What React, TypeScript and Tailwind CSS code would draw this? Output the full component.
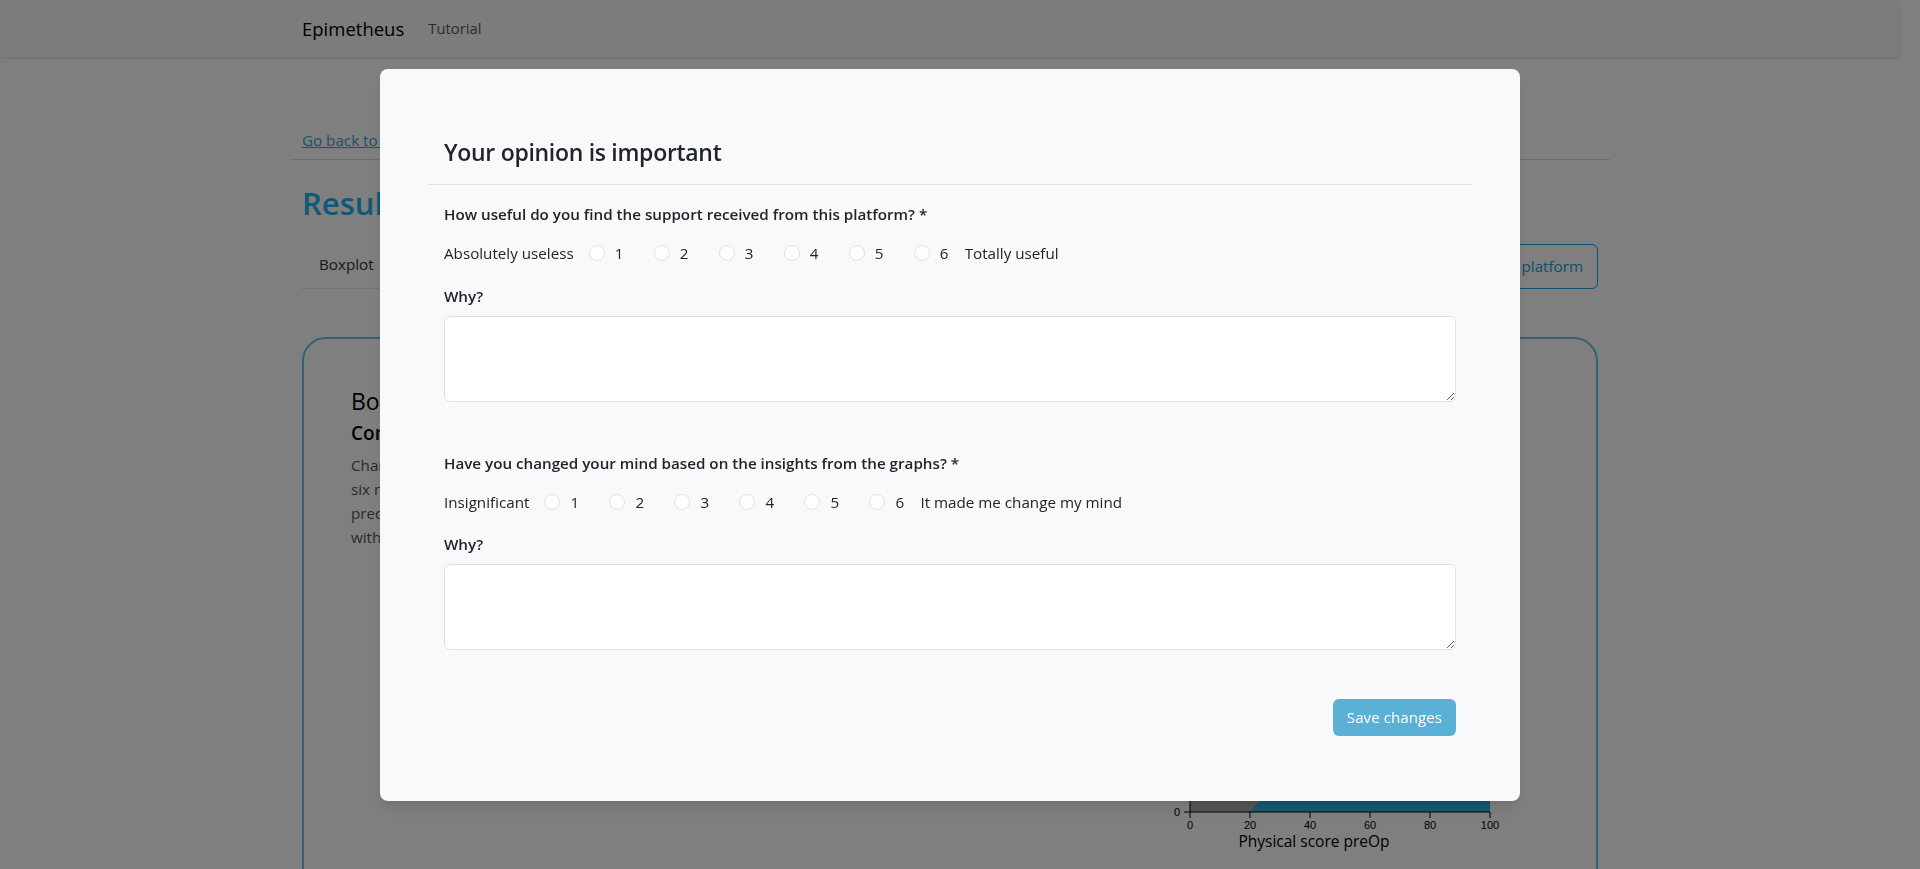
import React from 'react';

const font = { fontFamily: '"Open Sans", "Noto Sans", sans-serif' };

// one 1..6 scale row with its two end labels
function Scale({ left, right }: { left: string; right: string }) {
  const nums = [1, 2, 3, 4, 5, 6];
  return (
    <div className="flex items-center h-6 text-[15.2px] text-[#212529]">
      <span className="mr-[15px]">{left}</span>
      {nums.map((n) => (
        <label key={n} className={`flex items-center ${n === 6 ? 'mr-[16px]' : 'mr-[30px]'}`}>
          <input
            type="radio"
            className="appearance-none w-4 h-4 rounded-full border border-[#dee2e6] bg-white mr-[10px]"
          />
          <span className="w-[9px]">{n}</span>
        </label>
      ))}
      <span>{right}</span>
    </div>
  );
}

function Chart() {
  const ticks = [0, 20, 40, 60, 80, 100];
  return (
    <svg width="360" height="480" viewBox="0 0 360 480" className="block">
      <rect x="40" y="200" width="100" height="225" fill="#aab0b0" />
      <path d="M100 425 L112 411 L150 300 L340 200 L340 425 Z" fill="#2ab4e4" />
      <line x1="40" y1="150" x2="40" y2="425" stroke="#000" />
      <line x1="34" y1="425" x2="40" y2="425" stroke="#000" />
      <text x="30" y="429" fontSize="11" textAnchor="end" fontFamily="Liberation Sans, sans-serif">0</text>
      <line x1="40" y1="425" x2="340" y2="425" stroke="#000" />
      {ticks.map((t, i) => (
        <g key={t}>
          <line x1={40 + i * 60} y1="425" x2={40 + i * 60} y2="431" stroke="#000" />
          <text x={40 + i * 60} y="442" fontSize="11" textAnchor="middle" fontFamily="Liberation Sans, sans-serif">
            {t}
          </text>
        </g>
      ))}
      <text x="164" y="460" fontSize="15.5" textAnchor="middle" fontFamily="Open Sans, sans-serif" fill="#000">
        Physical score preOp
      </text>
    </svg>
  );
}

export default function App() {
  return (
    <div className="relative h-[869px] overflow-hidden bg-white" style={font}>
      {/* page behind the dialog */}
      <div className="pr-[20px]">
        <nav className="h-[57px] bg-[#f8f9fa] shadow-sm">
          <div className="mx-auto w-[1320px] px-3 h-full flex items-center">
            <span className="text-[18.5px] text-black mr-[24px]">Epimetheus</span>
            <span className="text-[14.8px] text-[#595959]">Tutorial</span>
          </div>
        </nav>
        <div className="mx-auto w-[1320px]">
          <div className="px-3 pt-[71px]">
            <a className="text-[15.2px] leading-6 underline text-[#2aa8e0]">Go back to list</a>
          </div>
          <hr className="mt-[7px] border-t border-[#dcdcdc]" />
          <div className="px-3">
            <h2 className="mt-[24px] text-[31px] leading-[38px] font-semibold text-[#1cb0f0]">Results</h2>
            <div className="mt-[20px] flex items-end justify-between">
              <div className="flex border-b border-[#dee2e6] w-[600px]">
                <span className="px-4 pt-[9px] pb-[11px] text-[15.2px] leading-6 text-[#333] border border-transparent">Boxplot</span>
              </div>
              <button className="h-[45px] px-[14px] rounded-[6px] border border-[#1a9edc] text-[#1a9edc] text-[15.2px]">
                Rate this platform
              </button>
            </div>
            <div className="mt-[48px] h-[700px] border-2 border-[#5ec4e8] rounded-[24px] px-[47px] pt-[48px] flex justify-between">
              <div className="w-[620px]">
                <h3 className="text-[23px] leading-[29px] font-medium text-black">Boxplot</h3>
                <h4 className="mt-[5px] text-[19px] leading-6 font-semibold text-black">Compare</h4>
                <p className="mt-[8px] text-[15.2px] leading-6 text-[#555]">
                  Change in
                  <br />
                  six months
                  <br />
                  predicted
                  <br />
                  within
                </p>
              </div>
              <div className="mr-[39px]">
                <Chart />
              </div>
            </div>
          </div>
        </div>
      </div>

      {/* backdrop + dialog */}
      <div className="fixed inset-0 bg-black/50" />
      <div className="fixed inset-0 pr-[20px]">
        <div className="mx-auto mt-[69px] w-[1140px] rounded-lg bg-[#f8f9fa] shadow-lg pt-[52px] px-[48px] pb-[65px] text-[#212529]">
          <div className="px-4 pt-[17px] pb-[17px] border-b border-[#dee2e6]">
            <h4 className="text-[23px] leading-[29px] font-semibold tracking-[-0.3px]">Your opinion is important</h4>
          </div>
          <div className="px-4">
            <div className="mt-[17px] text-[15.2px] leading-6 font-semibold">
              How useful do you find the support received from this platform? *
            </div>
            <div className="mt-[15px]">
              <Scale left="Absolutely useless" right="Totally useful" />
            </div>
            <div className="mt-[19px] text-[15.2px] leading-6 font-semibold">Why?</div>
            <textarea
              rows={3}
              className="mt-2 block w-full h-[86px] rounded-[6px] border border-[#dee2e6] bg-white px-3 py-1.5 outline-none"
            />

            <div className="mt-[49px] text-[15.2px] leading-6 font-semibold">
              Have you changed your mind based on the insights from the graphs? *
            </div>
            <div className="mt-[15px]">
              <Scale left="Insignificant" right="It made me change my mind" />
            </div>
            <div className="mt-[18px] text-[15.2px] leading-6 font-semibold">Why?</div>
            <textarea
              rows={3}
              className="mt-2 block w-full h-[86px] rounded-[6px] border border-[#dee2e6] bg-white px-3 py-1.5 outline-none"
            />

            <div className="mt-[49px] flex justify-end">
              <button className="h-[37px] px-[14px] rounded-[6px] bg-[#5ab1d5] text-white text-[15.2px]">Save changes</button>
            </div>
          </div>
        </div>
      </div>
    </div>
  );
}
